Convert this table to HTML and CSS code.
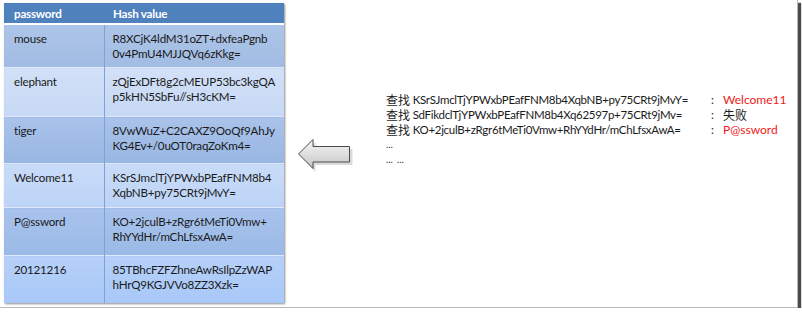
FILE: index.html
```html
<!DOCTYPE html>
<html>
<head>
<meta charset="utf-8">
<link rel="stylesheet" href="styles.css">
</head>
<body>
<div class="frame">
  <table class="hash-table">
    <thead>
      <tr><th class="c1">password</th><th class="c2">Hash value</th></tr>
    </thead>
    <tbody>
      <tr class="r1"><td class="c1">mouse</td><td class="c2">R8XCjK4ldM31oZT+dxfeaPgnb<br>0v4PmU4MJJQVq6zKkg=</td></tr>
      <tr class="r2"><td class="c1">elephant</td><td class="c2">zQjExDFt8g2cMEUP53bc3kgQA<br>p5kHN5SbFu//sH3cKM=</td></tr>
      <tr class="r3"><td class="c1">tiger</td><td class="c2">8VwWuZ+C2CAXZ9OoQf9AhJy<br>KG4Ev+/0uOT0raqZoKm4=</td></tr>
      <tr class="r4"><td class="c1">Welcome11</td><td class="c2">KSrSJmclTjYPWxbPEafFNM8b4<br>XqbNB+py75CRt9jMvY=</td></tr>
      <tr class="r5"><td class="c1">P@ssword</td><td class="c2">KO+2jculB+zRgr6tMeTi0Vmw+<br>RhYYdHr/mChLfsxAwA=</td></tr>
      <tr class="r6"><td class="c1">20121216</td><td class="c2">85TBhcFZFZhneAwRsIlpZzWAP<br>hHrQ9KGJVVo8ZZ3Xzk=</td></tr>
    </tbody>
  </table>

  <svg class="arrow" width="58" height="38" viewBox="0 0 58 38">
    <defs>
      <linearGradient id="ag" x1="0" y1="0" x2="0" y2="1">
        <stop offset="0" stop-color="#f4f4f4"/>
        <stop offset="0.5" stop-color="#dedede"/>
        <stop offset="1" stop-color="#c4c4c4"/>
      </linearGradient>
    </defs>
    <polygon points="3,18 17,3 17,10 54,10 54,26 17,26 17,33" fill="#999" opacity="0.35" transform="translate(1.5,2)"/>
    <polygon points="1.5,17 16,2.5 16,9.5 52.5,9.5 52.5,25 16,25 16,31.5" fill="url(#ag)" stroke="#4a4a4a" stroke-width="1"/>
  </svg>

  <div class="lookup">
    <div class="line"><span class="q"><span class="cjk">查找</span> KSrSJmclTjYPWxbPEafFNM8b4XqbNB+py75CRt9jMvY=</span><span class="colon">:</span><span class="res red">Welcome11</span></div>
    <div class="line"><span class="q"><span class="cjk">查找</span> SdFikdclTjYPWxbPEafFNM8b4Xq62597p+75CRt9jMv=</span><span class="colon">:</span><span class="res"><span class="cjk">失败</span></span></div>
    <div class="line"><span class="q"><span class="cjk">查找</span> KO+2jculB+zRgr6tMeTi0Vmw+RhYYdHr/mChLfsxAwA=</span><span class="colon">:</span><span class="res red">P@ssword</span></div>
    <div class="line dots">…</div>
    <div class="line dots">… …</div>
  </div>
</div>
</body>
</html>
```

FILE: styles.css
```css
html, body {
  margin: 0;
  padding: 0;
  background: #ffffff;
}

.frame {
  width: 798px;
  height: 308px;
  background: #ffffff;
  border-right: 1px solid #b8b8b8;
  border-bottom: 1px solid #b8b8b8;
  box-shadow: 3px 3px 1px #4a4a4a;
  box-sizing: border-box;
  display: flex;
  align-items: flex-start;
  padding: 3px 0 0 4px;
  font-family: Lato, "Noto Sans CJK SC", sans-serif;
}

.hash-table {
  border-collapse: collapse;
  table-layout: fixed;
  width: 280px;
  font-size: 11.6px;
  letter-spacing: -0.2px;
  line-height: 15px;
  color: #1a1a1a;
  box-shadow: 1px 1px 2px rgba(0, 0, 0, 0.45);
  flex: none;
}

.hash-table th,
.hash-table td {
  text-align: left;
  vertical-align: top;
  padding: 0 0 0 10px;
  white-space: nowrap;
}

.hash-table th.c1 { width: 100px; }

.hash-table tbody td.c2 { padding-left: 8px; }

.hash-table thead th {
  background: #4f81bd;
  color: #ffffff;
  font-weight: bold;
  height: 21px;
  padding-top: 3px;
  box-sizing: border-box;
  border-bottom: 2px solid #ffffff;
}

.hash-table thead th.c2 { padding-left: 9px; }

.hash-table tbody td {
  padding-top: 6px;
  border-top: 1px solid #dde8f8;
}

.hash-table tbody td.c2 {
  border-left: 1px solid #7ea2d6;
}

.hash-table tbody tr:first-child td { border-top: none; }

.r1 td { height: 36px; background: linear-gradient(#adc5e8, #a1bbe2); }
.r2 td { height: 42px; background: linear-gradient(#d2e0f7, #c6d8f5); }
.r3 td { height: 40px; background: linear-gradient(#a9c3ea, #98b6e2); }
.r4 td { height: 37px; background: linear-gradient(#c8dbf8, #bdd3f6); }
.r5 td { height: 41px; background: linear-gradient(#a8c3ec, #9ab9e6); }
.r6 td { height: 41px; background: linear-gradient(#b6d0f8, #a8c8f8); }

.arrow {
  flex: none;
  margin: 134px 0 0 13px;
}

.lookup {
  flex: none;
  margin: 89px 0 0 31px;
  font-size: 11.5px;
  letter-spacing: -0.3px;
  line-height: 15px;
  color: #1a1a1a;
}

.line {
  display: grid;
  grid-template-columns: 325px 12px auto;
  height: 15px;
  white-space: nowrap;
}

.cjk {
  display: inline-block;
  vertical-align: top;
  height: 15px;
  overflow: hidden;
  font-family: "Noto Sans CJK SC", sans-serif;
  font-size: 12px;
  line-height: 15px;
  letter-spacing: 0;
}

.res.red { font-size: 12px; letter-spacing: 0; }

.red { color: #f01818; }

.dots {
  display: block;
  font-size: 9px;
  letter-spacing: 0;
  word-spacing: 2px;
}
```
